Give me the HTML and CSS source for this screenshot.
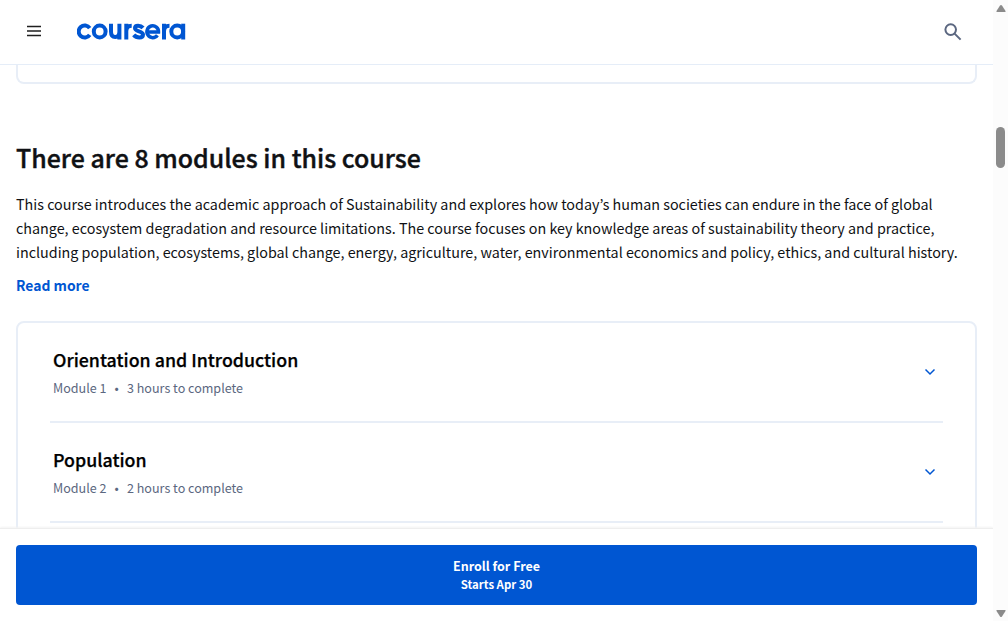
FILE: index.html
```
<!DOCTYPE html>
<html lang="en"><head><meta charset="utf-8"><title>Coursera</title><link rel="stylesheet" href="styles.css"></head>
<body>
<div class="app">
<div class="page">
<header class="header">
<svg class="menu" viewBox="0 0 20 20"><path d="M3 4.600h14M3 9h14M3 13.400h14"/></svg>
<svg class="logo" viewBox="0 0 109 20" role="img" aria-label="coursera"><g fill="none" stroke="#0056d2" stroke-width="4"><path d="M12.700 6.200A6 6 0 1 0 12.700 12.800"/><circle cx="22.700" cy="9.500" r="5.900"/><path d="M34 1.700v7.800q0 5.600 4.200 5.600t4.200-5.600V1.700M42.400 9v8.500"/><path d="M49.300 17.500V1.700M49.300 9.200q0-5.400 5.400-5.400"/><path d="M66 5.900C63.500 2.900 58 2.900 58 6c0 4.200 8 2.500 8 6.700 0 3.600-6.500 3.500-9.300.2"/><path stroke-width="3.500" d="M71 10.100h10.500A5.800 5.900 0 1 0 80.400 13.200"/><path d="M87 17.500V1.700M87 9.200q0-5.400 5.500-5.400"/><circle cx="100.200" cy="9.500" r="5.900"/><path d="M106.200 1.700v15.800"/></g></svg>
<svg class="search" viewBox="0 0 20 20"><circle cx="7.700" cy="7.600" r="5.300"/><path d="M11.600 11.600l6 6"/></svg>
</header>
<main class="content">
<div class="card-end"></div>
<h1 class="title">There are 8 modules in this course</h1>
<p class="intro"><span>This course introduces the academic approach of Sustainability and explores how today’s human societies can endure in the face of global</span> <span>change, ecosystem degradation and resource limitations. The course focuses on key knowledge areas of sustainability theory and practice,</span> <span>including population, ecosystems, global change, energy, agriculture, water, environmental economics and policy, ethics, and cultural history.</span></p>
<a class="more">Read more</a>
<section class="modules">
<article class="module"><div><h2>Orientation and Introduction</h2><p>Module 1<b>•</b>3 hours to complete</p></div><svg class="chevron" viewBox="0 0 12 12"><path d="M1.500 3.500L6 8l4.500-4.500"/></svg></article>
<article class="module"><div><h2>Population</h2><p>Module 2<b>•</b>2 hours to complete</p></div><svg class="chevron" viewBox="0 0 12 12"><path d="M1.500 3.500L6 8l4.500-4.500"/></svg></article>
</section>
</main>
<footer class="footer"><button class="enroll"><span>Enroll for Free</span><small>Starts Apr 30</small></button></footer>
</div>
<aside class="scrollbar"><svg viewBox="0 0 15 621"><path d="M4 12h8q1 0 .5-1L9 5.500q-1-1-2 0L3.500 11q-.5 1 .5 1z"/><rect x="3" y="127" width="9" height="41" rx="4.500"/><path d="M4 610h8q1 0 .5 1L9 616.500q-1 1-2 0L3.500 611q-.5-1 .5-1z"/></svg></aside>
</div>
</body></html>
```
FILE: styles.css
```
*{box-sizing:border-box}
body{margin:0;font-family:"Noto Sans CJK KR","Noto Sans",sans-serif;color:#0f1114}
.app{display:flex;width:1008px;height:621px;overflow:hidden}
.page{width:993px;height:621px;display:flex;flex-direction:column}
.header{height:65px;border-bottom:1px solid #e5edf8;display:flex;align-items:center;padding:0 30px 0 24px;flex:none}
.menu{width:20px;height:20px;fill:none;stroke:#1f1f1f;stroke-width:1.5}
.logo{width:109px;height:20px;margin-left:33px}
.search{width:20px;height:20px;margin-left:auto;fill:none;stroke:#5b6780;stroke-width:2}
.content{height:463px;overflow:hidden;padding:0 16px;flex:none}
.card-end{height:19px;border:2px solid #e8eef7;border-top:0;border-radius:0 0 8px 8px}
.title{font-size:24.930px;line-height:32px;font-weight:500;margin:57px 0 19px;white-space:nowrap;-webkit-text-stroke:.4px #0f1114}
.intro{font-size:14.330px;line-height:24px;margin:0}
.intro span{display:block;white-space:nowrap}
.more{display:block;font-size:13.900px;line-height:24px;margin-top:9px;color:#0056d2;font-weight:600}
.modules{margin-top:24px;height:240px;border:2px solid #e8eef7;border-radius:8px;padding:0 32px}
.module{height:100px;border-bottom:2px solid #e8eef7;display:flex;justify-content:space-between;align-items:center;padding:0 7px 0 3px}
.module h2{font-size:17.800px;line-height:24px;margin:0 0 7px;font-weight:500;color:#000;-webkit-text-stroke:.25px #000}
.module p{font-size:12.550px;line-height:20px;margin:0;color:#5b6780}
.module b{font-weight:400;display:inline-block;width:20.500px;text-align:center}
.chevron{width:12px;height:12px;fill:none;stroke:#0056d2;stroke-width:1.5}
.footer{height:93px;padding:16px;border-top:1px solid #eee;box-shadow:0 -1px 2px #f3f3f3}
.enroll{display:flex;flex-direction:column;align-items:center;justify-content:center;width:961px;height:60px;border:0;border-radius:4px;background:#0056d2;color:#fff;font:600 12.500px/18px "Noto Sans CJK KR","Noto Sans",sans-serif}
.enroll small{font-size:11.400px}
.scrollbar{width:15px;background:#fcfcfc}
.scrollbar svg{display:block;width:15px;height:621px;fill:#8b8b8b}
```
